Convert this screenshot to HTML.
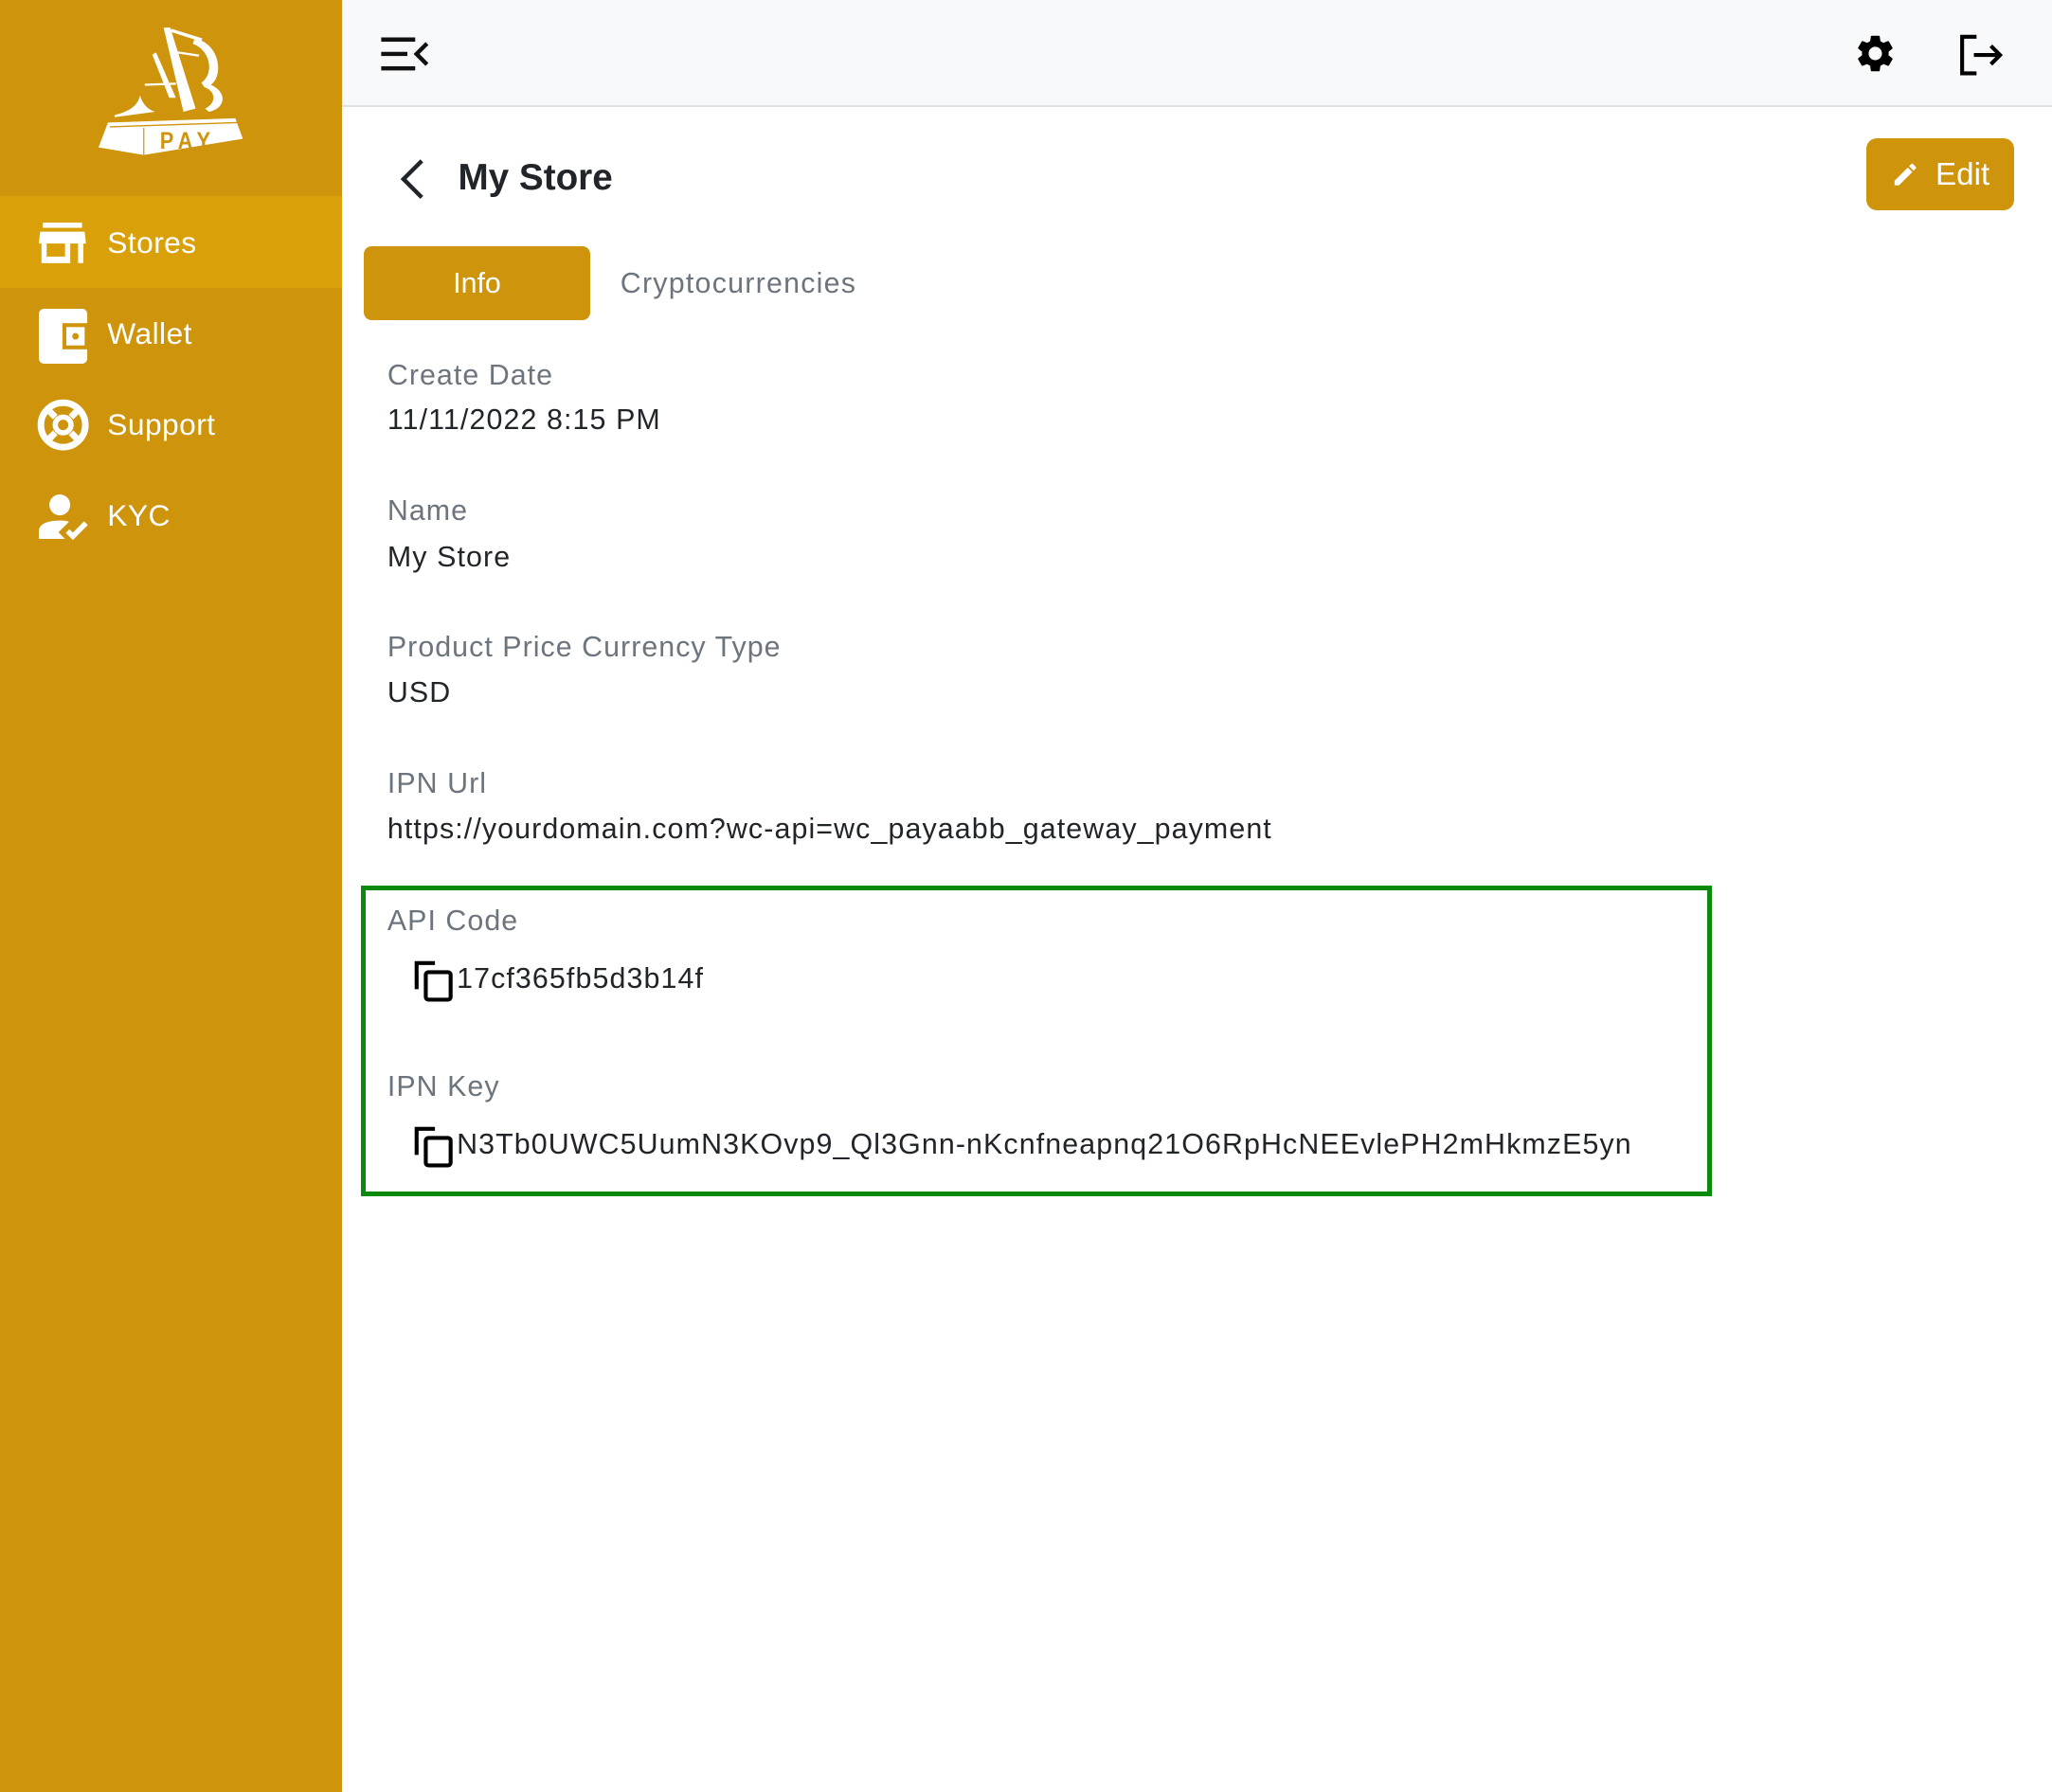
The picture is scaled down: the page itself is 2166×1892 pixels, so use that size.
<!DOCTYPE html>
<html><head><meta charset="utf-8"><style>
html,body{margin:0;padding:0;background:#fff;overflow:hidden}
#w{zoom:1.38138;position:relative;width:1568px;height:1370px;font-family:"Liberation Sans",Arial,sans-serif}
.a{position:absolute;white-space:nowrap}
.sb{left:0;top:0;width:261px;height:1370px;background:#CE940B}
.act{left:0;top:150px;width:261px;height:70px;background:#D9A00A}
.nav{color:#fff;font-size:23px;line-height:30px;letter-spacing:0.3px}
.lbl{color:#6c757d;font-size:22px;line-height:30px;left:296px;letter-spacing:0.75px}
.val{color:#212529;font-size:22px;line-height:30px;left:296px;letter-spacing:0.8px}
</style></head><body><div id="w">
<div class="a sb"></div>
<div class="a act"></div>
<svg class="a" style="left:75px;top:20px" width="111" height="99" viewBox="103 24 154 120" preserveAspectRatio="none">
<g fill="#fff">
<path d="M172 25 L179 25 L206 100 L193 103 Z"/>
<path d="M180 26 L213 35 L212 38 L180 29 Z"/>
<path d="M205 35 C232 40 236 70 222 78 C240 85 238 100 220 103 L216 100 C228 95 228 84 215 80 L212 76 C226 68 222 46 203 40 Z"/>
<path d="M187 47 L210 50 L209 52 L187 49Z"/>
<path d="M160 50 L164 48 L185 90 L178 90 Z"/>
<path d="M152 77 L185 76 L185 78 L152 79Z"/>
<path d="M120 106 C140 102 145 95 147 88 C150 96 155 101 163 103 L120 108 Z"/>
<path d="M113 113 L248 109 L256 128 L151 143 L103 136 Z"/>
</g>
<path d="M115 117 L250 113 M151 118 L151 143" stroke="#CE940B" stroke-width="1.2" fill="none"/>
<text x="168" y="137" font-family="Liberation Sans" font-weight="bold" font-size="22" letter-spacing="6" fill="#CE940B">PAY</text>
</svg>
<svg class="a" style="left:30px;top:170px" width="36" height="32" viewBox="0 0 36 32" fill="#fff"><rect x="3" y="0" width="30" height="4"/><path d="M1 7h34l1 9h-36z"/><rect x="2" y="16" width="4" height="15"/><rect x="30" y="16" width="4" height="15"/><rect x="6" y="26" width="14" height="5"/><rect x="20" y="16" width="4" height="15"/></svg>
<div class="a nav" style="left:82px;top:171px">Stores</div>
<svg class="a" style="left:30px;top:236px" width="38" height="42" viewBox="0 0 38 42" fill="#fff"><rect x="0" y="0" width="37" height="42" rx="4"/><rect x="18" y="11" width="20" height="20" fill="#CE940B"/><rect x="21" y="14" width="14" height="14" fill="#fff"/><circle cx="28" cy="21" r="2.5" fill="#CE940B"/></svg>
<div class="a nav" style="left:82px;top:240px">Wallet</div>
<svg class="a" style="left:28px;top:305px" width="40" height="40" viewBox="0 0 40 40"><circle cx="20" cy="20" r="17" fill="none" stroke="#fff" stroke-width="5"/><circle cx="20" cy="20" r="6" fill="none" stroke="#fff" stroke-width="4"/><g stroke="#fff" stroke-width="5"><path d="M8 8l6 6M32 8l-6 6M8 32l6-6M32 32l-6-6"/></g></svg>
<div class="a nav" style="left:82px;top:310px">Support</div>
<svg class="a" style="left:30px;top:378px" width="38" height="36" viewBox="0 0 38 36" fill="#fff"><circle cx="16" cy="8" r="8"/><path d="M0 34v-6c0-5 6-8 16-8c3 0 5 0 7 1l-8 8 5 5z"/><path d="M22 28l4 4 10-10" stroke="#fff" stroke-width="4" fill="none"/></svg>
<div class="a nav" style="left:82px;top:379px">KYC</div>
<div class="a" style="left:261px;top:0;width:1307px;height:82px;background:#f8f9fa;border-bottom:2px solid #dee2e6;box-sizing:border-box"></div>
<svg class="a" style="left:290px;top:28px" width="38" height="28" viewBox="0 0 38 28" stroke="#111" stroke-width="3.2" fill="none"><path d="M1 2h26M1 13h20M1 24h26M36 5l-8 8 8 8"/></svg>
<svg class="a" style="left:1416px;top:24px" width="34" height="34" viewBox="0 0 24 24"><path fill="#000" d="M19.14 12.94c.04-.3.06-.61.06-.94 0-.32-.02-.64-.07-.94l2.03-1.580a.49.49 0 00.12-.61l-1.92-3.32a.488.488 0 00-.59-.22l-2.39.96c-.5-.38-1.03-.7-1.62-.94l-.36-2.54a.484.484 0 00-.48-.41h-3.840c-.24 0-.43.17-.47.41l-.36 2.54c-.59.24-1.13.57-1.62.94l-2.39-.96c-.22-.08-.47 0-.59.22L2.74 8.87c-.12.21-.08.47.12.61l2.03 1.58c-.05.3-.09.63-.09.94s.02.64.07.94l-2.03 1.58a.49.49 0 00-.12.61l1.92 3.32c.12.22.37.29.59.22l2.39-.96c.5.38 1.03.7 1.62.94l.36 2.54c.05.24.24.41.48.41h3.84c.24 0 .44-.17.47-.41l.36-2.54c.59-.24 1.13-.56 1.62-.94l2.39.96c.22.08.47 0 .59-.22l1.92-3.32c.12-.22.07-.47-.12-.61l-2.01-1.58zM12 15.6c-1.98 0-3.6-1.620-3.6-3.6s1.62-3.6 3.6-3.6 3.6 1.62 3.6 3.6-1.62 3.6-3.6 3.6z"/></svg>
<svg class="a" style="left:1496px;top:26px" width="36" height="32" viewBox="0 0 36 32" stroke="#000" stroke-width="3" fill="none"><path d="M14 2H3v28h11M12 16h20M25 9l7 7-7 7"/></svg>
<svg class="a" style="left:303px;top:121px" width="24" height="32" viewBox="0 0 24 32" stroke="#212529" stroke-width="3.2" fill="none"><path d="M19 2L5 16l14 14"/></svg>
<div class="a" style="left:350px;top:118px;font-size:28px;line-height:36px;color:#212529;font-weight:bold">My Store</div>
<div class="a" style="left:1426px;top:106px;width:113px;height:55px;background:#CE940B;border-radius:8px"></div>
<svg class="a" style="left:1445px;top:122px" width="22" height="22" viewBox="0 0 24 24" fill="#fff"><path d="M3 17.25V21h3.75L17.81 9.94l-3.75-3.75L3 17.25zM20.71 7.04a1 1 0 000-1.41l-2.34-2.34a1 1 0 00-1.41 0l-1.830 1.83 3.75 3.75 1.83-1.83z"/></svg>
<div class="a" style="left:1479px;top:119px;color:#fff;font-size:24px;line-height:30px">Edit</div>
<div class="a" style="left:278px;top:188px;width:173px;height:57px;background:#CE940B;border-radius:6px;color:#fff;font-size:22px;line-height:57px;text-align:center">Info</div>
<div class="a" style="left:474px;top:202px;color:#6c757d;font-size:22px;line-height:30px;letter-spacing:0.9px">Cryptocurrencies</div>
<div class="a lbl" style="top:272px">Create Date</div>
<div class="a val" style="top:306px">11/11/2022 8:15 PM</div>
<div class="a lbl" style="top:376px">Name</div>
<div class="a val" style="top:411px">My Store</div>
<div class="a lbl" style="top:480px">Product Price Currency Type</div>
<div class="a val" style="top:515px">USD</div>
<div class="a lbl" style="top:584px">IPN Url</div>
<div class="a val" style="top:619px">https://yourdomain.com?wc-api=wc_payaabb_gateway_payment</div>
<div class="a" style="left:276px;top:677px;width:1032px;height:237px;border:4px solid #0a8a0a;box-sizing:border-box"></div>
<div class="a lbl" style="top:689px">API Code</div>
<svg class="a" style="left:316px;top:734px" width="30" height="32" viewBox="0 0 30 32" fill="none" stroke="#000" stroke-width="3"><path d="M2 22V2h14"/><rect x="9" y="9" width="19" height="21" rx="2"/></svg>
<div class="a val" style="left:349px;top:733px">17cf365fb5d3b14f</div>
<div class="a lbl" style="top:816px">IPN Key</div>
<svg class="a" style="left:316px;top:861px" width="30" height="32" viewBox="0 0 30 32" fill="none" stroke="#000" stroke-width="3"><path d="M2 22V2h14"/><rect x="9" y="9" width="19" height="21" rx="2"/></svg>
<div class="a val" style="left:349px;top:860px">N3Tb0UWC5UumN3KOvp9_Ql3Gnn-nKcnfneapnq21O6RpHcNEEvlePH2mHkmzE5yn</div>
</div></body></html>
